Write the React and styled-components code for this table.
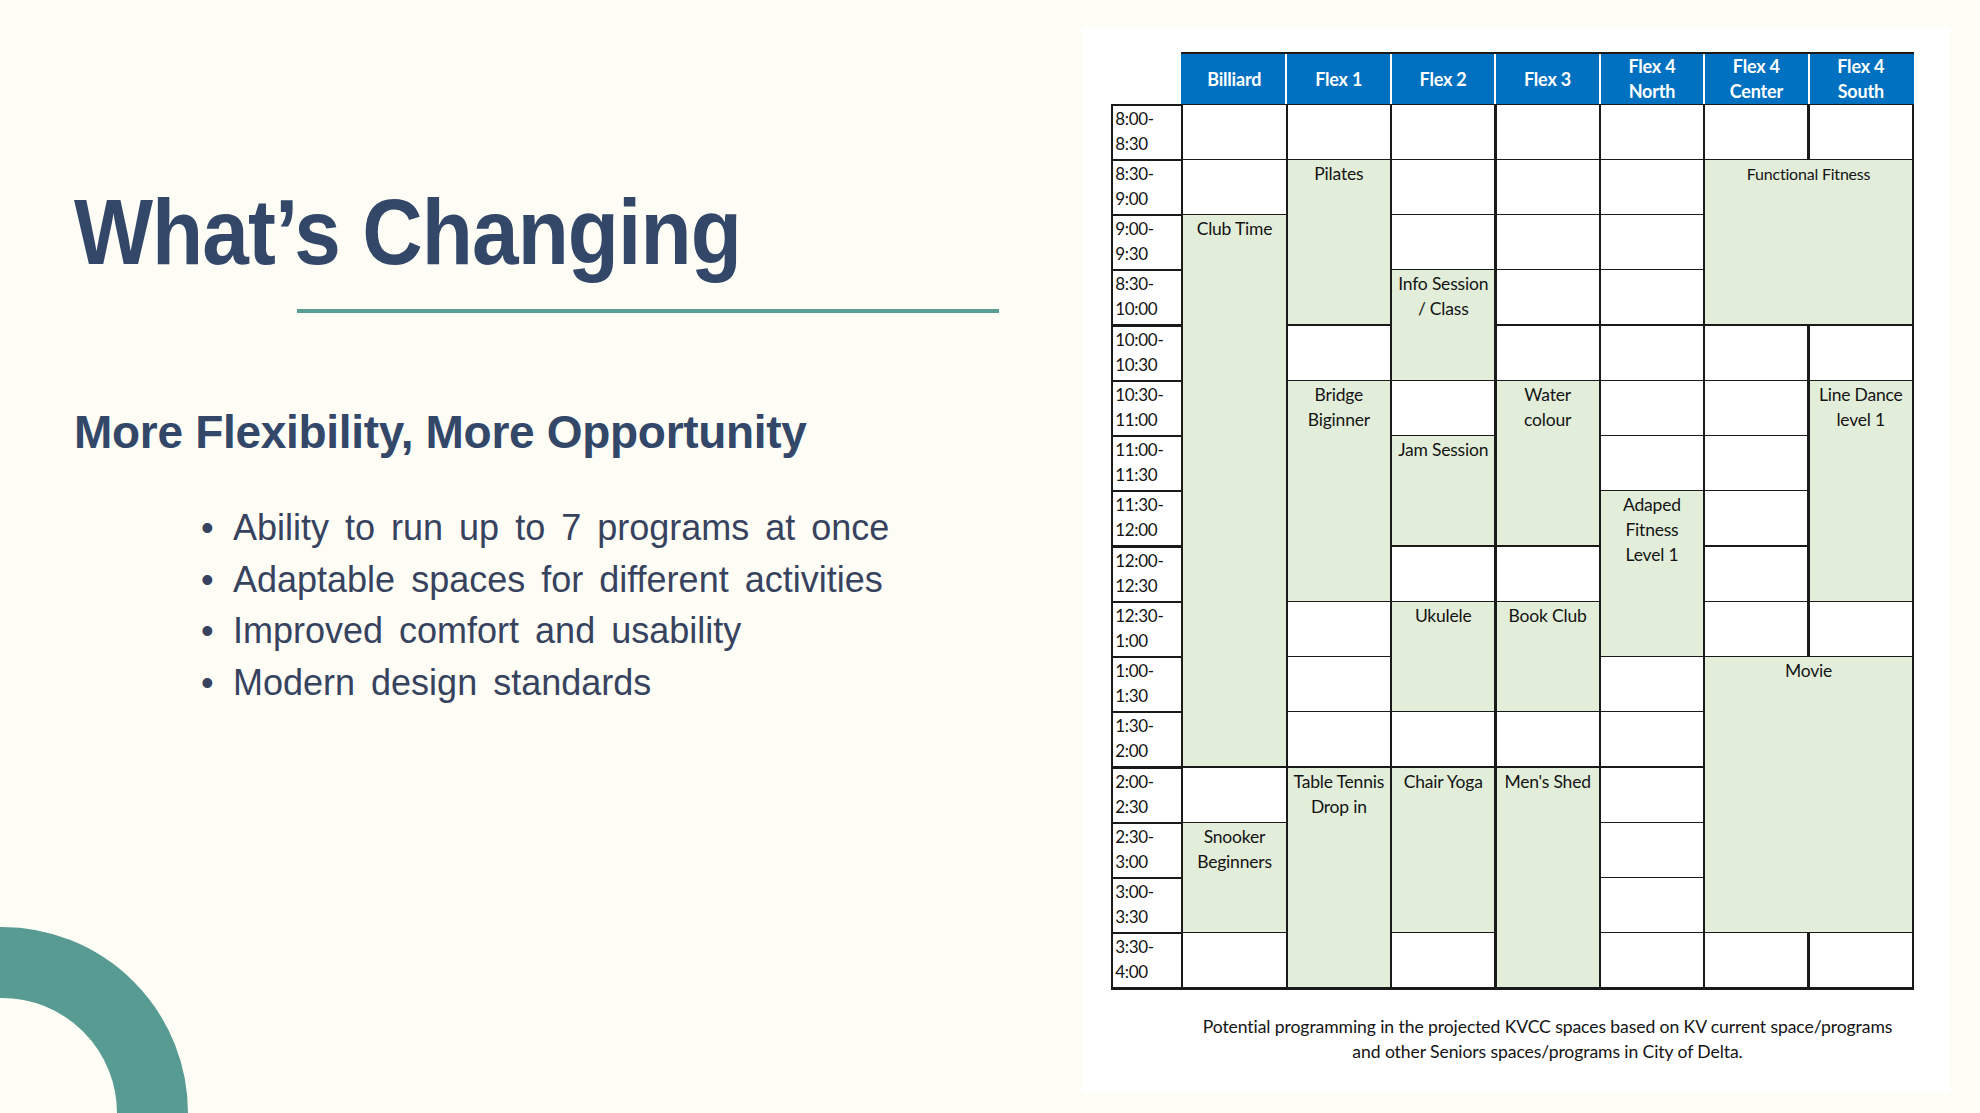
import React from 'react';
import styled, { createGlobalStyle } from 'styled-components';

const GlobalStyle = createGlobalStyle`
    html, body { margin: 0; padding: 0; }
    body { background: #fdfcf5; }
`;

const HEADERS = [['Billiard'], ['Flex 1'], ['Flex 2'], ['Flex 3'], ['Flex 4', 'North'], ['Flex 4', 'Center'], ['Flex 4', 'South']];

const TIMES = [
    ['8:00', '8:30'], ['8:30', '9:00'], ['9:00', '9:30'], ['8:30', '10:00'],
    ['10:00', '10:30'], ['10:30', '11:00'], ['11:00', '11:30'], ['11:30', '12:00'],
    ['12:00', '12:30'], ['12:30', '1:00'], ['1:00', '1:30'], ['1:30', '2:00'],
    ['2:00', '2:30'], ['2:30', '3:00'], ['3:00', '3:30'], ['3:30', '4:00'],
];

// col = 0..6 (Billiard..Flex 4 South), row = 0..15, rows/cols = span
const EVENTS = [
    { col: 0, row: 2, rows: 10, label: ['Club Time'] },
    { col: 0, row: 13, rows: 2, label: ['Snooker', 'Beginners'] },
    { col: 1, row: 1, rows: 3, label: ['Pilates'] },
    { col: 1, row: 5, rows: 4, label: ['Bridge', 'Biginner'] },
    { col: 1, row: 12, rows: 4, label: ['Table Tennis', 'Drop in'] },
    { col: 2, row: 3, rows: 2, label: ['Info Session', '/ Class'] },
    { col: 2, row: 6, rows: 2, label: ['Jam Session'] },
    { col: 2, row: 9, rows: 2, label: ['Ukulele'] },
    { col: 2, row: 12, rows: 3, label: ['Chair Yoga'] },
    { col: 3, row: 5, rows: 3, label: ['Water', 'colour'] },
    { col: 3, row: 9, rows: 2, label: ['Book Club'] },
    { col: 3, row: 12, rows: 4, label: ["Men's Shed"] },
    { col: 4, row: 7, rows: 3, label: ['Adaped', 'Fitness', 'Level 1'] },
    { col: 5, row: 1, rows: 3, cols: 2, label: ['Functional Fitness'], small: true },
    { col: 6, row: 5, rows: 4, label: ['Line Dance', 'level 1'] },
    { col: 5, row: 10, rows: 5, cols: 2, label: ['Movie'] },
];

const BULLETS = [
    'Ability to run up to 7 programs at once',
    'Adaptable spaces for different activities',
    'Improved comfort and usability',
    'Modern design standards',
];

function buildCells() {
    const taken = TIMES.map(() => Array(7).fill(false));
    EVENTS.forEach(ev => {
        for (let r = ev.row; r < ev.row + ev.rows; r++) {
            for (let c = ev.col; c < ev.col + (ev.cols || 1); c++) taken[r][c] = true;
        }
    });
    const empties = [];
    taken.forEach((cols, r) => cols.forEach((t, c) => {
        if (!t) empties.push({ col: c, row: r, rows: 1, label: null });
    }));
    return [...EVENTS, ...empties];
}

export default function App() {
    const cells = buildCells();

    return (
        <>
            <GlobalStyle />
            <Slide>
                <TextColumn>
                    <Title>What’s Changing</Title>
                    <Rule />
                    <Subtitle>More Flexibility, More Opportunity</Subtitle>
                    <BulletList>
                        {BULLETS.map(b => (
                            <BulletItem key={b}>
                                <Dot>•</Dot>
                                <span>{b}</span>
                            </BulletItem>
                        ))}
                    </BulletList>
                </TextColumn>

                <Panel>
                    <HeaderWrap>
                        <HeaderGrid>
                            {HEADERS.map(h => (
                                <HeaderCell key={h.join(' ')}>
                                    {h.map(line => <div key={line}>{line}</div>)}
                                </HeaderCell>
                            ))}
                        </HeaderGrid>
                    </HeaderWrap>

                    <Grid>
                        {TIMES.map(([from, to], r) => (
                            <TimeCell key={from + r} style={{ gridRow: r + 1 }}>
                                {from}-<br />{to}
                            </TimeCell>
                        ))}
                        {cells.map(cell => (
                            <Cell
                                key={`${cell.row}-${cell.col}`}
                                $green={!!cell.label}
                                $small={cell.small}
                                style={{
                                    gridRow: `${cell.row + 1} / span ${cell.rows}`,
                                    gridColumn: `${cell.col + 2} / span ${cell.cols || 1}`,
                                }}
                            >
                                {cell.label && cell.label.map(line => <div key={line}>{line}</div>)}
                            </Cell>
                        ))}
                    </Grid>

                    <Caption>
                        Potential programming in the projected KVCC spaces based on KV current space/programs
                        <br />
                        and other Seniors spaces/programs in City of Delta.
                    </Caption>
                </Panel>

                <Arc />
            </Slide>
        </>
    );
}

const Slide = styled.div`
    position: relative;
    display: flex;
    width: 1980px;
    height: 1113px;
    overflow: hidden;
    background: #fdfcf5;
`;

const TextColumn = styled.div`
    width: 1082px;
    flex-shrink: 0;
    box-sizing: border-box;
    padding: 186px 0 0 74px;
    color: #334769;
    font-family: "Liberation Sans", Arial, sans-serif;
`;

const Title = styled.h1`
    margin: 0;
    font-size: 93px;
    line-height: 93px;
    font-weight: 700;
    letter-spacing: -1px;
    white-space: nowrap;
    transform: scaleX(0.9);
    transform-origin: left center;
`;

const Rule = styled.div`
    margin: 30px 0 0 223px;
    width: 702px;
    height: 4px;
    background: #5a9d95;
`;

const Subtitle = styled.h2`
    margin: 96px 0 0;
    font-size: 46px;
    line-height: 46px;
    font-weight: 700;
    letter-spacing: -0.3px;
    white-space: nowrap;
`;

const BulletList = styled.ul`
    list-style: none;
    margin: 47px 0 0 127px;
    padding: 0;
    color: #37435e;
`;

const BulletItem = styled.li`
    display: flex;
    font-size: 36px;
    line-height: 51.7px;
    word-spacing: 6px;
    white-space: nowrap;
`;

const Dot = styled.span`
    width: 32px;
    flex-shrink: 0;
`;

const Panel = styled.div`
    width: 868px;
    height: 1066px;
    margin-top: 27px;
    box-sizing: border-box;
    padding: 25px 0 0 29px;
    background: #ffffff;
    font-family: Lato, "Open Sans", sans-serif;
    color: #141414;
`;

const HeaderWrap = styled.div`
    margin-left: 70px;
    width: 733px;
    box-sizing: border-box;
    border-top: 2.5px solid #1a1a1a;
    padding: 0 2px;
    background: #0070c0;
`;

const HeaderGrid = styled.div`
    display: grid;
    grid-template-columns: repeat(7, 1fr);
    column-gap: 2px;
    height: 49.5px;
    background: #ffffff;
`;

const HeaderCell = styled.div`
    display: flex;
    flex-direction: column;
    align-items: center;
    justify-content: center;
    background: #0070c0;
    color: #ffffff;
    font-weight: 700;
    font-size: 18px;
    line-height: 25px;
    letter-spacing: -0.2px;
`;

const Grid = styled.div`
    display: grid;
    grid-template-columns: 68px repeat(7, 1fr);
    grid-template-rows: repeat(16, 1fr);
    gap: 2.2px;
    width: 803px;
    height: 886px;
    box-sizing: border-box;
    padding: 2.2px;
    background: #1a1a1a;
`;

const TimeCell = styled.div`
    grid-column: 1;
    background: #ffffff;
    padding-left: 2px;
    font-size: 17px;
    line-height: 25px;
    letter-spacing: -0.3px;
`;

const Cell = styled.div`
    background: ${p => (p.$green ? '#e2eeda' : '#ffffff')};
    text-align: center;
    font-size: ${p => (p.$small ? '16px' : '17.5px')};
    line-height: 25px;
    margin-top: -1px;
    padding-top: 1px;
    letter-spacing: -0.2px;
    white-space: nowrap;
`;

const Caption = styled.p`
    margin: 24px 0 0 70px;
    width: 733px;
    text-align: center;
    font-size: 17.6px;
    line-height: 25px;
    letter-spacing: -0.1px;
    white-space: nowrap;
`;

const Arc = styled.div`
    position: absolute;
    left: -184px;
    top: 927px;
    width: 372px;
    height: 372px;
    box-sizing: border-box;
    border: 71px solid #579b93;
    border-radius: 50%;
`;
